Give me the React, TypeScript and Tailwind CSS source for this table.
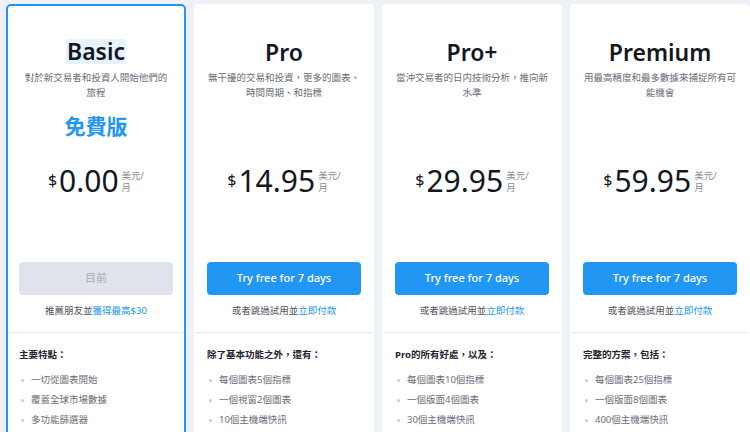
import React from "react";

type Plan = {
  name: string;
  desc: [string, string];
  free?: boolean;
  price: string;
  current?: boolean;
  heading: string;
  items: string[];
};

const plans: Plan[] = [
  {
    name: "Basic",
    desc: ["對於新交易者和投資人開始他們的", "旅程"],
    free: true,
    price: "0.00",
    current: true,
    heading: "主要特點：",
    items: ["一切從圖表開始", "覆蓋全球市場數據", "多功能篩選器"],
  },
  {
    name: "Pro",
    desc: ["無干擾的交易和投資，更多的圖表、", "時間周期、和指標"],
    price: "14.95",
    heading: "除了基本功能之外，還有：",
    items: ["每個圖表5個指標", "一個視窗2個圖表", "10個主機端快訊"],
  },
  {
    name: "Pro+",
    desc: ["當沖交易者的日内技術分析，推向新", "水準"],
    price: "29.95",
    heading: "Pro的所有好處，以及：",
    items: ["每個圖表10個指標", "一個版面4個圖表", "30個主機端快訊"],
  },
  {
    name: "Premium",
    desc: ["用最高精度和最多數據來捕捉所有可", "能機會"],
    price: "59.95",
    heading: "完整的方案，包括：",
    items: ["每個圖表25個指標", "一個版面8個圖表", "400個主機端快訊"],
  },
];

function Card({ plan }: { plan: Plan }) {
  return (
    <div
      className={
        "w-[180px] shrink-0 h-[440px] rounded-[5px] bg-white border-2 " +
        (plan.current ? "border-[#2196f3]" : "border-transparent")
      }
    >
      <div className="pt-[33px] flex flex-col items-center">
        <div className="leading-[26px] h-[26px] text-[23px] font-semibold text-[#131722]">
          {plan.current ? (
            <span className="inline-block align-top h-[25px] leading-[25px] px-[1px] bg-[#e6f3fc]">
              {plan.name}
            </span>
          ) : (
            <span>{plan.name}</span>
          )}
        </div>
        <div className="mt-[5px] text-[9.5px] leading-[15px] text-[#6a6d78] text-center whitespace-nowrap">
          <div>{plan.desc[0]}</div>
          <div>{plan.desc[1]}</div>
        </div>
        <div className="mt-[13px] h-[26px] leading-[26px] text-[21px] font-bold text-[#2196f3]">
          {plan.free ? "免費版" : ""}
        </div>
        <div className="mt-[24px] h-[36px] flex items-start justify-center text-[#131722]">
          <span className="mt-[9px] text-[16px] leading-[16px]">$</span>
          <span className="ml-[2px] text-[30px] leading-[36px]">{plan.price}</span>
          <span className="ml-[3px] mt-[7px] text-[9.5px] leading-[12px] text-[#8a8d96]">
            美元/
            <br />月
          </span>
        </div>
      </div>
      <div className="px-[11px] mt-[63px]">
        {plan.current ? (
          <div className="h-[33px] rounded-[4px] bg-[#e0e3eb] flex items-center justify-center text-[11px] text-[#a9adb8]">
            目前
          </div>
        ) : (
          <div className="h-[33px] rounded-[4px] bg-[#2196f3] flex items-center justify-center text-[11px] font-medium text-white">
            Try free for 7 days
          </div>
        )}
      </div>
      <div className="mt-[8px] h-[16px] leading-[16px] text-[9.5px] text-center text-[#50535e] whitespace-nowrap">
        {plan.current ? (
          <>
            推薦朋友並<span className="text-[#2196f3]">獲得最高$30</span>
          </>
        ) : (
          <>
            或者跳過試用並<span className="text-[#2196f3]">立即付款</span>
          </>
        )}
      </div>
      <div className="mt-[13px] border-t border-[#e6e9f0] px-[11px] pt-[14px]">
        <div className="h-[16px] leading-[16px] text-[9.5px] font-bold text-[#222430]">
          {plan.heading}
        </div>
        <ul className="mt-[7px]">
          {plan.items.map((it) => (
            <li key={it} className="flex items-center h-[20px] text-[9.5px] text-[#6a6d78]">
              <span className="ml-[2px] mr-[7px] w-[3px] h-[3px] rounded-full bg-[#c9ccd4]" />
              {it}
            </li>
          ))}
        </ul>
      </div>
    </div>
  );
}

export default function App() {
  return (
    <div
      className="w-[750px] h-[432px] overflow-hidden bg-[#eef1f8]"
      style={{ fontFamily: '"Noto Sans", "Noto Sans CJK TC", sans-serif' }}
    >
      <div className="flex gap-[8px] pl-[6px] pt-[4px]">
        {plans.map((p) => (
          <Card key={p.name} plan={p} />
        ))}
      </div>
    </div>
  );
}
